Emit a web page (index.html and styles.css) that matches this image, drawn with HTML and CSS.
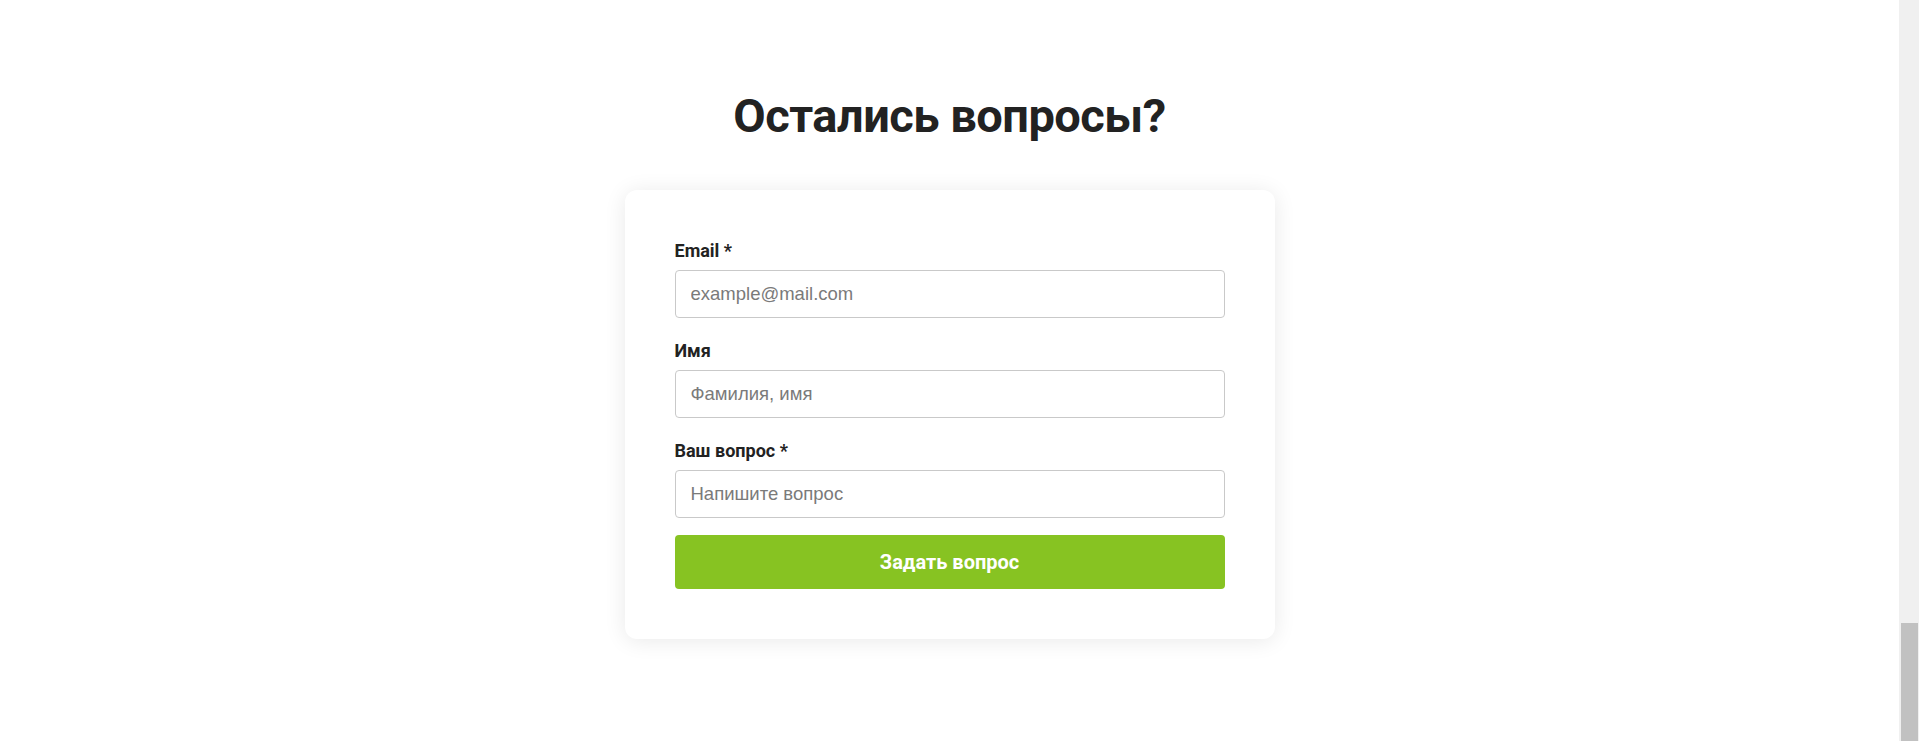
FILE: index.html
```html
<!DOCTYPE html>
<html lang="ru">
<head>
<meta charset="utf-8">
<title>Остались вопросы?</title>
<link rel="stylesheet" href="styles.css">
</head>
<body>
<div class="page">
  <main class="main">
    <section class="questions">
      <h2 class="questions__title">Остались вопросы?</h2>
      <form class="card">
        <div class="field">
          <label class="field__label" for="email">Email *</label>
          <input class="field__input" id="email" type="text" placeholder="example@mail.com">
        </div>
        <div class="field">
          <label class="field__label" for="name">Имя</label>
          <input class="field__input" id="name" type="text" placeholder="Фамилия, имя">
        </div>
        <div class="field">
          <label class="field__label" for="question">Ваш вопрос *</label>
          <input class="field__input" id="question" type="text" placeholder="Напишите вопрос">
        </div>
        <button class="card__button" type="button">Задать вопрос</button>
      </form>
    </section>
  </main>
  <div class="scrollbar"><div class="scrollbar__thumb"></div></div>
</div>
</body>
</html>
```
FILE: styles.css
```css
* { box-sizing: border-box; }
html, body { margin: 0; padding: 0; }
body {
  background: #ffffff;
  font-family: Roboto, "Noto Sans", Arial, sans-serif;
  color: #222222;
  height: 741px;
  overflow: hidden;
}
.page {
  display: flex;
  height: 741px;
}
.main {
  flex: 1;
}
.questions {
  display: flex;
  flex-direction: column;
  align-items: center;
  padding-top: 84px;
}
.questions__title {
  margin: 0;
  font-size: 47px;
  line-height: 64px;
  font-weight: 700;
  color: #222222;
  letter-spacing: -0.5px;
}
.card {
  margin-top: 42px;
  width: 650px;
  background: #ffffff;
  border-radius: 12px;
  box-shadow: 0 2px 22px rgba(0, 0, 0, 0.09);
  padding: 50px 50px 50px;
  display: flex;
  flex-direction: column;
  gap: 22px;
}
.field {
  display: flex;
  flex-direction: column;
  gap: 8px;
}
.field__label {
  font-size: 18px;
  line-height: 22px;
  font-weight: 700;
  color: #222222;
}
.field__input {
  height: 48px;
  width: 100%;
  border: 1px solid #c9c9c9;
  border-radius: 4px;
  padding: 0 15px;
  font-family: "Liberation Sans", Arial, sans-serif;
  font-size: 18.5px;
  color: #222;
  background: #fff;
  outline: none;
}
.field__input::placeholder {
  color: #7a7a7a;
}
.card__button {
  margin-top: -5px;
  height: 54px;
  width: 100%;
  border: none;
  border-radius: 4px;
  background: #87c322;
  color: #ffffff;
  font-family: Roboto, "Noto Sans", Arial, sans-serif;
  font-size: 20px;
  font-weight: 700;
  cursor: pointer;
}
.scrollbar {
  width: 20px;
  height: 741px;
  background: #f0f0f0;
  display: flex;
  flex-direction: column;
  justify-content: flex-end;
  padding: 0 1px 0 2px;
}
.scrollbar__thumb {
  height: 118px;
  background: #c1c1c1;
}
```
